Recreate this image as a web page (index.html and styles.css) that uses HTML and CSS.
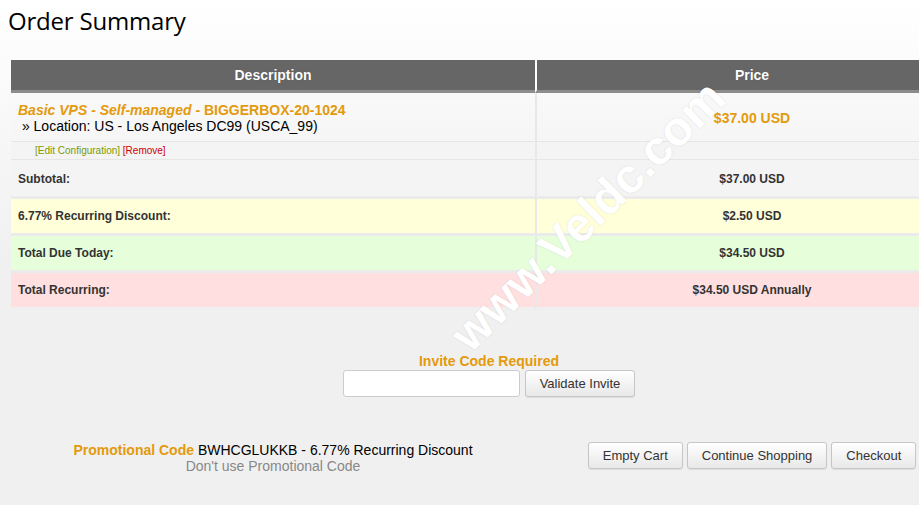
FILE: index.html
```html
<!DOCTYPE html>
<html lang="en">
<head>
<meta charset="utf-8">
<title>Order Summary</title>
<link rel="stylesheet" href="styles.css">
</head>
<body>
<div class="page">
  <h1 class="title">Order Summary</h1>
  <div class="cart">
    <table class="summary">
      <thead>
        <tr>
          <th class="col-desc">Description</th>
          <th class="col-price">Price</th>
        </tr>
      </thead>
      <tbody>
        <tr class="product">
          <td class="col-desc">
            <div class="pinfo">
              <div class="pname"><em>Basic VPS - Self-managed</em> - BIGGERBOX-20-1024</div>
              <div class="pconf">&nbsp;» Location: US - Los Angeles DC99 (USCA_99)</div>
            </div>
          </td>
          <td class="col-price pprice">$37.00 USD</td>
        </tr>
        <tr class="edit">
          <td class="col-desc"><span class="editcfg">[Edit Configuration]</span> <span class="remove">[Remove]</span></td>
          <td class="col-price"></td>
        </tr>
        <tr class="total subtotal">
          <td class="col-desc">Subtotal:</td>
          <td class="col-price">$37.00 USD</td>
        </tr>
        <tr class="total discount">
          <td class="col-desc">6.77% Recurring Discount:</td>
          <td class="col-price">$2.50 USD</td>
        </tr>
        <tr class="total due">
          <td class="col-desc">Total Due Today:</td>
          <td class="col-price">$34.50 USD</td>
        </tr>
        <tr class="total recurring">
          <td class="col-desc">Total Recurring:</td>
          <td class="col-price">$34.50 USD Annually</td>
        </tr>
      </tbody>
    </table>

    <div class="invite">
      <div class="invite-label">Invite Code Required</div>
      <div class="invite-form">
        <input class="invite-input" type="text">
        <button class="btn" type="button">Validate Invite</button>
      </div>
    </div>

    <div class="actions">
      <div class="promo">
        <div><span class="promo-label">Promotional Code</span> BWHCGLUKKB - 6.77% Recurring Discount</div>
        <div class="promo-remove">Don't use Promotional Code</div>
      </div>
      <div class="buttons">
        <button class="btn" type="button">Empty Cart</button>
        <button class="btn" type="button">Continue Shopping</button>
        <button class="btn" type="button">Checkout</button>
      </div>
    </div>
  </div>
  <div class="watermark">www.Veldc.com</div>
</div>
</body>
</html>
```

FILE: styles.css
```css
html {
  overflow: hidden;
}
body {
  margin: 0;
  background: #f0f0f0 linear-gradient(#ffffff 0, #f0f0f0 260px) no-repeat;
  font-family: "Liberation Sans", Arial, sans-serif;
  color: #000;
  min-height: 505px;
}
.page {
  position: relative;
  width: 100%;
  min-height: 505px;
  overflow: hidden;
}
.title {
  margin: 0;
  padding: 4px 0 0 8px;
  font-family: "Open Sans", sans-serif;
  font-weight: 400;
  font-size: 24px;
  line-height: 34px;
  color: #000;
  letter-spacing: -0.2px;
}
.cart {
  margin: 22px 0 0 11px;
  width: 956px;
}
.summary {
  width: 956px;
  table-layout: fixed;
  border-collapse: separate;
  border-spacing: 0;
}
.summary th,
.summary td {
  padding: 0;
}
.summary th {
  height: 30px;
  background: #666666;
  color: #fff;
  font-weight: bold;
  font-size: 14px;
  text-align: center;
  border-bottom: 3px solid #8c8c8c;
  text-shadow: 0 0 1px rgba(0,0,0,0.3);
}
.summary .col-desc {
  width: 524px;
}
.summary th.col-price {
  border-left: 2px solid #ffffff;
}
.summary td.col-price {
  border-left: 2px solid #e8e8e8;
  text-align: center;
}
.product td {
  height: 48px;
  background: linear-gradient(#f9f9f9, #f6f6f6);
  border-bottom: 1px solid #e6e6e6;
}
.product .col-desc {
  padding-left: 7px;
  vertical-align: top;
}
.pinfo {
  padding-top: 9px;
}
.product .pprice {
  height: 46px;
  padding-top: 2px;
}
.pname {
  color: #e39a0c;
  font-weight: bold;
  font-size: 14px;
  line-height: 16px;
}
.pconf {
  font-size: 14px;
  line-height: 16px;
  color: #000;
}
.pprice {
  color: #e39a0c;
  font-weight: bold;
  font-size: 14px;
}
.edit td {
  height: 17px;
  background: #f4f4f4;
  border-bottom: 1px solid #e6e6e6;
  font-size: 10px;
  line-height: 12px;
}
.edit .col-desc {
  height: 16px;
  padding-left: 24px;
  padding-top: 1px;
}
.editcfg {
  color: #7a9a00;
}
.remove {
  color: #cc0000;
}
.total td {
  height: 34px;
  font-size: 12px;
  font-weight: bold;
  color: #333;
  border-bottom: 3px solid #ebebeb;
}
.total .col-desc {
  padding-left: 7px;
}
.subtotal td {
  height: 34px;
  padding-top: 2px;
  background: #f4f4f4;
}
.discount td {
  background: #ffffda;
}
.due td {
  background: #e6ffda;
}
.recurring td {
  background: #ffdfdf;
  border-bottom-color: #efefef;
}
.invite {
  margin-top: 43px;
  text-align: center;
}
.invite-label {
  color: #e39a0c;
  font-weight: bold;
  font-size: 14px;
  line-height: 16px;
}
.invite-form {
  display: flex;
  justify-content: center;
  gap: 5px;
  margin-top: 1px;
}
.invite-input {
  box-sizing: border-box;
  width: 177px;
  height: 27px;
  margin: 0;
  border: 1px solid #cccccc;
  border-radius: 3px;
  background: #fff;
}
.btn {
  box-sizing: border-box;
  height: 27px;
  margin: 0;
  padding: 0 14px;
  font-family: "Liberation Sans", Arial, sans-serif;
  font-size: 13px;
  color: #333;
  background: linear-gradient(#ffffff, #e8e8e8);
  border: 1px solid #c6c6c6;
  border-radius: 3px;
  box-shadow: 0 1px 1px rgba(0,0,0,0.08);
}
.actions {
  display: flex;
  align-items: flex-start;
  margin-top: 45px;
}
.promo {
  width: 524px;
  text-align: center;
  font-size: 14px;
  line-height: 16px;
  color: #000;
}
.promo-label {
  color: #e39a0c;
  font-weight: bold;
}
.promo-remove {
  color: #888888;
}
.buttons {
  width: 430px;
  margin-left: 2px;
  display: flex;
  justify-content: center;
  gap: 4px;
}
.watermark {
  position: absolute;
  left: 588px;
  top: 216px;
  transform: translate(-50%, -50%) rotate(-44.5deg);
  font-family: "Liberation Sans", Arial, sans-serif;
  font-weight: bold;
  font-size: 48px;
  line-height: 1;
  color: #ffffff;
  white-space: nowrap;
  text-shadow: 0 0 2px rgba(0,0,0,0.12);
  pointer-events: none;
}
```
